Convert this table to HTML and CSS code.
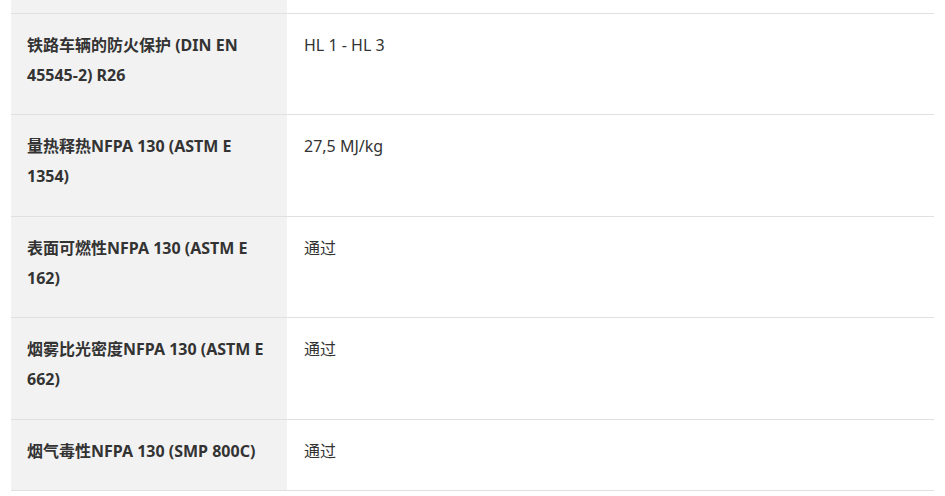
FILE: index.html
```html
<!DOCTYPE html>
<html lang="zh">
<head>
<meta charset="utf-8">
<link rel="stylesheet" href="styles.css">
</head>
<body>
<div class="table">
  <div class="row row-top"><div class="key"></div><div class="val"></div></div>
  <div class="row"><div class="key">铁路车辆的防火保护 (DIN EN 45545-2) R26</div><div class="val">HL 1 - HL 3</div></div>
  <div class="row"><div class="key">量热释热NFPA 130 (ASTM E 1354)</div><div class="val">27,5 MJ/kg</div></div>
  <div class="row"><div class="key">表面可燃性NFPA 130 (ASTM E 162)</div><div class="val">通过</div></div>
  <div class="row"><div class="key">烟雾比光密度NFPA 130 (ASTM E 662)</div><div class="val">通过</div></div>
  <div class="row"><div class="key">烟气毒性NFPA 130 (SMP 800C)</div><div class="val">通过</div></div>
</div>
</body>
</html>
```
FILE: styles.css
```css
html, body {
  margin: 0;
  padding: 0;
  background: #fff;
}
body {
  font-family: "Noto Sans", "Noto Sans CJK SC", sans-serif;
  font-size: 16px;
  color: #333;
}
.table {
  margin: 0 11px;
  width: 923px;
}
.row {
  display: grid;
  grid-template-columns: 276px 1fr;
  border-bottom: 1px solid #e0e0e0;
}
.key {
  background: #f2f2f2;
  font-weight: 700;
  padding: 16px 16px 24.4px 16px;
  line-height: 30px;
}
.val {
  padding: 16px 16px 24.4px 17px;
  line-height: 30px;
}
.row-top .key, .row-top .val {
  height: 13px;
  padding: 0;
}
```
